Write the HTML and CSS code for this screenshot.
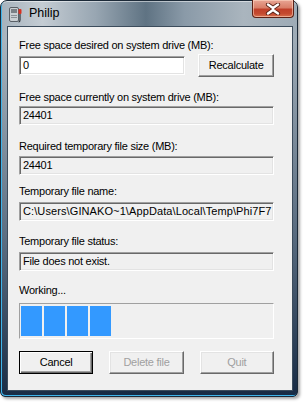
FILE: index.html
```html
<!DOCTYPE html>
<html>
<head>
<meta charset="utf-8">
<link rel="stylesheet" href="styles.css">
</head>
<body>
<div class="window">
  <div class="titlebar">
    <svg class="appicon" width="16" height="17" viewBox="0 0 16 17">
      <rect x="1.5" y="1.5" width="9" height="14" rx="1.5" fill="#c9ced2" stroke="#5a6066"/>
      <rect x="3" y="3" width="6" height="4" fill="#7a8086"/>
      <rect x="3" y="9" width="6" height="1" fill="#8a9096"/>
      <rect x="3" y="11" width="6" height="1" fill="#8a9096"/>
      <rect x="10.5" y="3" width="3" height="5" rx="1" fill="#d83020"/>
      <path d="M12 8 V14 Q12 16 10.5 16" fill="none" stroke="#303438" stroke-width="1.2"/>
    </svg>
    <span class="title">Philip</span>
    <div class="closebtn">
      <svg width="20" height="12" viewBox="0 0 20 12">
        <path d="M5 1.5 L10 5 L15 1.5 M5 10.5 L10 7 L15 10.5" fill="none" stroke="#5a2418" stroke-width="4.2" stroke-linecap="round"/>
        <path d="M5 1.5 L10 5 L15 1.5 M5 10.5 L10 7 L15 10.5 M10 5 V7" fill="none" stroke="#ffffff" stroke-width="2.4" stroke-linecap="round"/>
      </svg>
    </div>
  </div>
  <div class="client">
    <div class="label l1">Free space desired on system drive (MB):</div>
    <div class="row">
      <div class="field edit">0</div>
      <div class="btn recalc">Recalculate</div>
    </div>
    <div class="label l2">Free space currently on system drive (MB):</div>
    <div class="field ro">24401</div>
    <div class="label l3">Required temporary file size (MB):</div>
    <div class="field ro">24401</div>
    <div class="label l4">Temporary file name:</div>
    <div class="field ro path">C:\Users\GINAKO~1\AppData\Local\Temp\Phi7F7</div>
    <div class="label l5">Temporary file status:</div>
    <div class="field ro">File does not exist.</div>
    <div class="label l6">Working...</div>
    <div class="progress">
      <span class="blk"></span><span class="blk"></span><span class="blk"></span><span class="blk"></span>
    </div>
    <div class="buttons">
      <div class="btn default">Cancel</div>
      <div class="btn disabled">Delete file</div>
      <div class="btn disabled">Quit</div>
    </div>
  </div>
</div>
</body>
</html>
```
FILE: styles.css
```css
* { box-sizing: border-box; }
html, body { margin: 0; padding: 0; background: #ffffff; }
body { width: 303px; height: 402px; overflow: hidden; }

.window {
  width: 298px;
  height: 397px;
  border: 1px solid #1c2a38;
  border-radius: 7px 7px 5px 5px;
  background:
    linear-gradient(180deg, rgba(20,40,66,0) 0px, rgba(20,40,66,0) 40px, rgba(28,52,80,0.55) 60%, rgba(16,36,62,0.95) 100%),
    linear-gradient(90deg, #a6b2bc 0%, #c4ccd3 14%, #98a6b2 32%, #5f7383 49%, #8a9aa8 62%, #aab5be 82%, #9eabb6 100%);
  box-shadow: inset 1px -1px 0 #3fb4ea, inset 0 1px 0 rgba(255,255,255,0.5), 2px 2px 3px rgba(0,0,0,0.35);
  display: flex;
  flex-direction: column;
}

.titlebar {
  height: 25px;
  display: flex;
  align-items: flex-start;
}
.appicon { margin: 5px 0 0 7px; flex: none; }
.title {
  margin: 5px 0 0 5px;
  font-family: "Liberation Sans", Arial, sans-serif;
  font-size: 12.5px;
  line-height: 15px;
  color: #000;
}
.closebtn {
  margin: -1px 3px 0 auto;
  width: 42px;
  height: 18px;
  border: 1px solid #5c2116;
  border-top: none;
  border-radius: 0 0 4px 4px;
  background: linear-gradient(180deg, #e8a594 0%, #d97f69 45%, #c0402a 55%, #c44a30 80%, #d8704e 100%);
  box-shadow: inset 0 0 0 1px rgba(255,220,200,0.55);
  display: flex;
  align-items: center;
  justify-content: center;
}

.client {
  margin: 0 4px 5px 6px;
  flex: 1;
  border: 1px solid #3c4c5c;
  background: #f0f0f0;
  padding: 12px 18px 0 11px;
  font-family: "Liberation Sans", Arial, sans-serif;
  font-size: 11px;
  line-height: 13px;
  letter-spacing: -0.25px;
  color: #000;
}

.label { height: 13px; white-space: nowrap; }
.l1 { margin-bottom: 2px; }
.l2 { margin-top: 14px; margin-bottom: 2px; }
.l3 { margin-top: 15px; margin-bottom: 3px; }
.l4 { margin-top: 10px; margin-bottom: 4px; }
.l5 { margin-top: 14px; margin-bottom: 4px; }
.l6 { margin-top: 13px; margin-bottom: 6px; }

.row {
  height: 23px;
  display: flex;
  align-items: center;
  gap: 13px;
}

.field {
  height: 19px;
  padding: 2px 3px;
  border-style: solid;
  border-width: 1px;
  border-color: #a0a0a0 #ffffff #ffffff #a0a0a0;
  box-shadow: inset 1px 1px 0 #696969, inset -1px -1px 0 #e3e3e3;
  white-space: nowrap;
  overflow: hidden;
}
.edit { width: 167px; background: #ffffff; }
.ro { width: 255px; background: #f0f0f0; }
.path { letter-spacing: 0.1px; padding-right: 1px; }

.btn {
  height: 23px;
  width: 76px;
  display: flex;
  align-items: center;
  justify-content: center;
  background: #f0f0f0;
  border-style: solid;
  border-width: 1px;
  border-color: #ffffff #696969 #696969 #ffffff;
  box-shadow: inset -1px -1px 0 #a0a0a0, inset 1px 1px 0 #e3e3e3;
  white-space: nowrap;
}
.recalc { width: 76px; }
.default {
  border: 1px solid #000;
  box-shadow: inset 1px 1px 0 #ffffff, inset -1px -1px 0 #696969, inset -2px -2px 0 #a0a0a0;
  width: 75px;
}
.disabled { color: #a0a0a0; width: 75px; }

.progress {
  width: 255px;
  height: 36px;
  border-style: solid;
  border-width: 1px;
  border-color: #a0a0a0 #ffffff #ffffff #a0a0a0;
  padding: 2px 1px;
  display: flex;
  gap: 2px;
}
.blk { width: 21px; height: 100%; background: #3399ff; }

.buttons {
  margin-top: 12px;
  display: flex;
  gap: 16px;
}
```
